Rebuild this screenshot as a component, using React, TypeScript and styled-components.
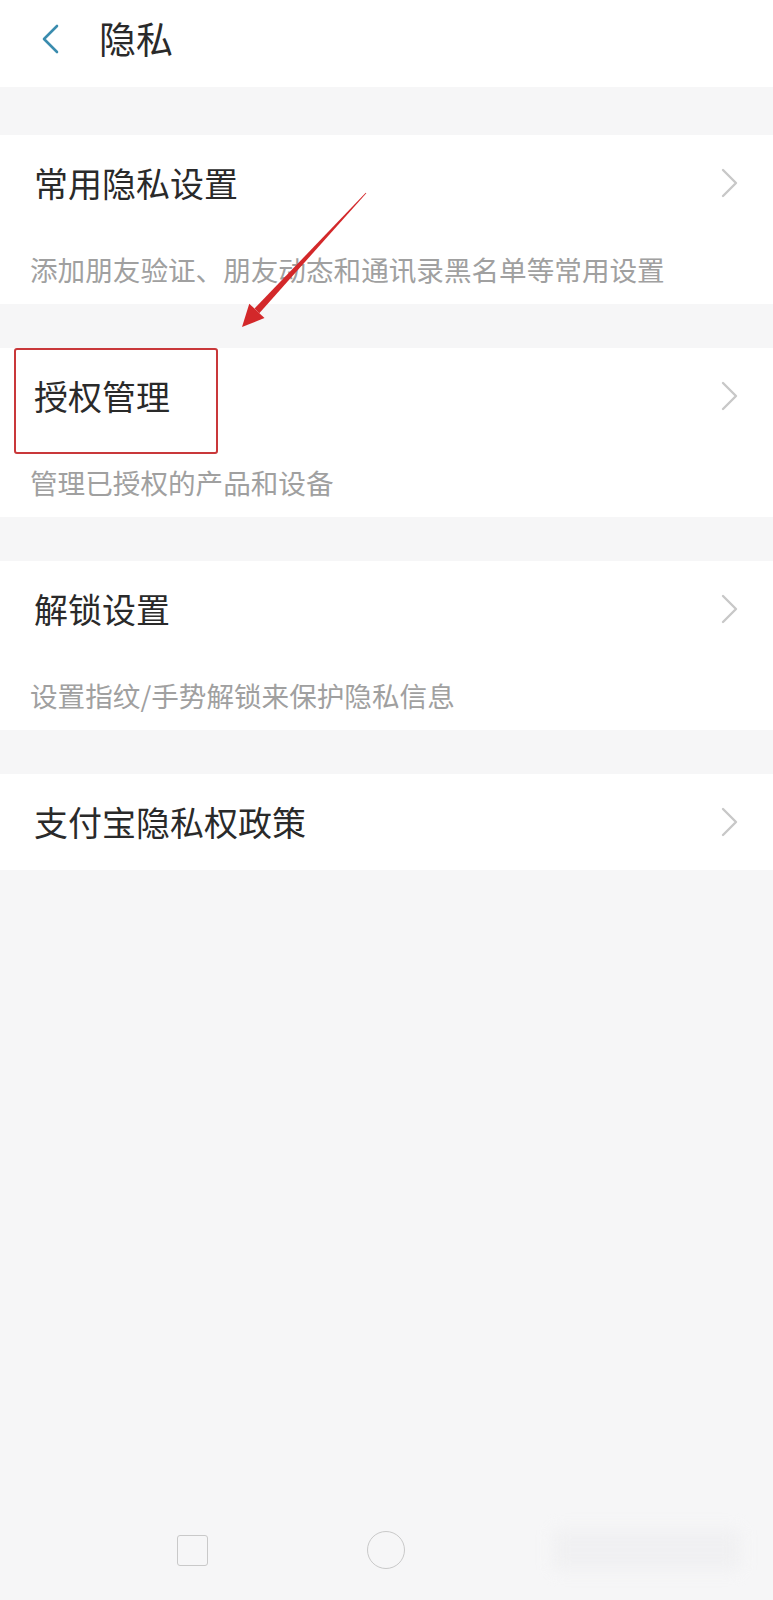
import React from "react";
import styled, { createGlobalStyle } from "styled-components";

const GlobalStyle = createGlobalStyle`
    html, body {
        margin: 0;
        padding: 0;
        background: #f6f6f7;
        font-family: "Noto Sans CJK SC", "Noto Sans", sans-serif;
    }
`

const Page = styled.div`
    position: relative;
    width: 773px;
    min-height: 1600px;
    display: flex;
    flex-direction: column;
    background: #f6f6f7;
    overflow: hidden;
`

const Header = styled.div`
    height: 87px;
    background: #ffffff;
    display: flex;
    align-items: center;
    padding: 0 0 10px 41px;
    box-sizing: border-box;
`

const Title = styled.h1`
    margin: 0 0 0 40px;
    font-size: 37px;
    font-weight: 400;
    color: #2a2a2a;
    line-height: 1;
`

const List = styled.div`
    display: flex;
    flex-direction: column;
    gap: 44px;
    padding-top: 48px;
`

const Card = styled.div`
    position: relative;
    background: #ffffff;
    display: flex;
    flex-direction: column;
`

const Row = styled.div`
    height: 96px;
    display: flex;
    align-items: center;
    justify-content: space-between;
    padding: 0 34px 0 34px;
`

const ItemTitle = styled.span`
    font-size: 34px;
    color: #2a2a2a;
    line-height: 1;
`

const Sub = styled.div`
    margin-top: 18px;
    padding: 0 0 15px 30px;
    font-size: 27.6px;
    line-height: 40px;
    color: #a0a0a0;
`

const Highlight = styled.div`
    position: absolute;
    top: 0;
    left: 14px;
    width: 204px;
    height: 106px;
    border: 2px solid #c9383a;
    border-radius: 3px;
    box-sizing: border-box;
`

const Arrow = styled.svg`
    position: absolute;
    left: 0;
    top: 0;
    pointer-events: none;
`

const Spacer = styled.div`
    flex: 1;
`

const NavBar = styled.div`
    height: 100px;
    display: flex;
    align-items: center;
    padding-left: 177px;
`

const NavSquare = styled.div`
    width: 31px;
    height: 31px;
    border: 1.5px solid #c9c9c9;
    border-radius: 3px;
    box-sizing: border-box;
`

const NavCircle = styled.div`
    width: 38px;
    height: 38px;
    margin-left: 159px;
    border: 1.5px solid #c9c9c9;
    border-radius: 50%;
    box-sizing: border-box;
`

const NavSmudge = styled.div`
    width: 187px;
    height: 40px;
    margin-left: 148px;
    background: #eeeef0;
    filter: blur(8px);
    opacity: 0.7;
`

const Back = () => (
    <svg width="18" height="30" viewBox="0 0 18 30">
        <path d="M16 2 L3 15 L16 28" fill="none" stroke="#3a8cae" strokeWidth="2.6" strokeLinecap="round" strokeLinejoin="round" />
    </svg>
)

const Chevron = () => (
    <svg width="18" height="30" viewBox="0 0 18 30">
        <path d="M2 2 L15 15 L2 28" fill="none" stroke="#c8c8c8" strokeWidth="2.4" strokeLinecap="round" strokeLinejoin="round" />
    </svg>
)

const items = [
    { title: "常用隐私设置", sub: "添加朋友验证、朋友动态和通讯录黑名单等常用设置" },
    { title: "授权管理", sub: "管理已授权的产品和设备", marked: true },
    { title: "解锁设置", sub: "设置指纹/手势解锁来保护隐私信息" },
    { title: "支付宝隐私权政策" },
]

export default function App() {
    return (
        <Page>
            <GlobalStyle />
            <Header>
                <Back />
                <Title>隐私</Title>
            </Header>
            <List>
                {items.map((it) => (
                    <Card key={it.title}>
                        <Row>
                            <ItemTitle>{it.title}</ItemTitle>
                            <Chevron />
                        </Row>
                        {it.sub && <Sub>{it.sub}</Sub>}
                        {it.marked && <Highlight />}
                    </Card>
                ))}
            </List>
            <Spacer />
            <NavBar>
                <NavSquare />
                <NavCircle />
                <NavSmudge />
            </NavBar>
            <Arrow width="773" height="400" viewBox="0 0 773 400">
                <polygon points="366.3,193.2 259.3,313.2 254.5,308.6 365.7,192.8" fill="#d3282a" />
                <polygon points="242,327 264.5,318 249.3,303.8" fill="#d3282a" />
            </Arrow>
        </Page>
    )
}
